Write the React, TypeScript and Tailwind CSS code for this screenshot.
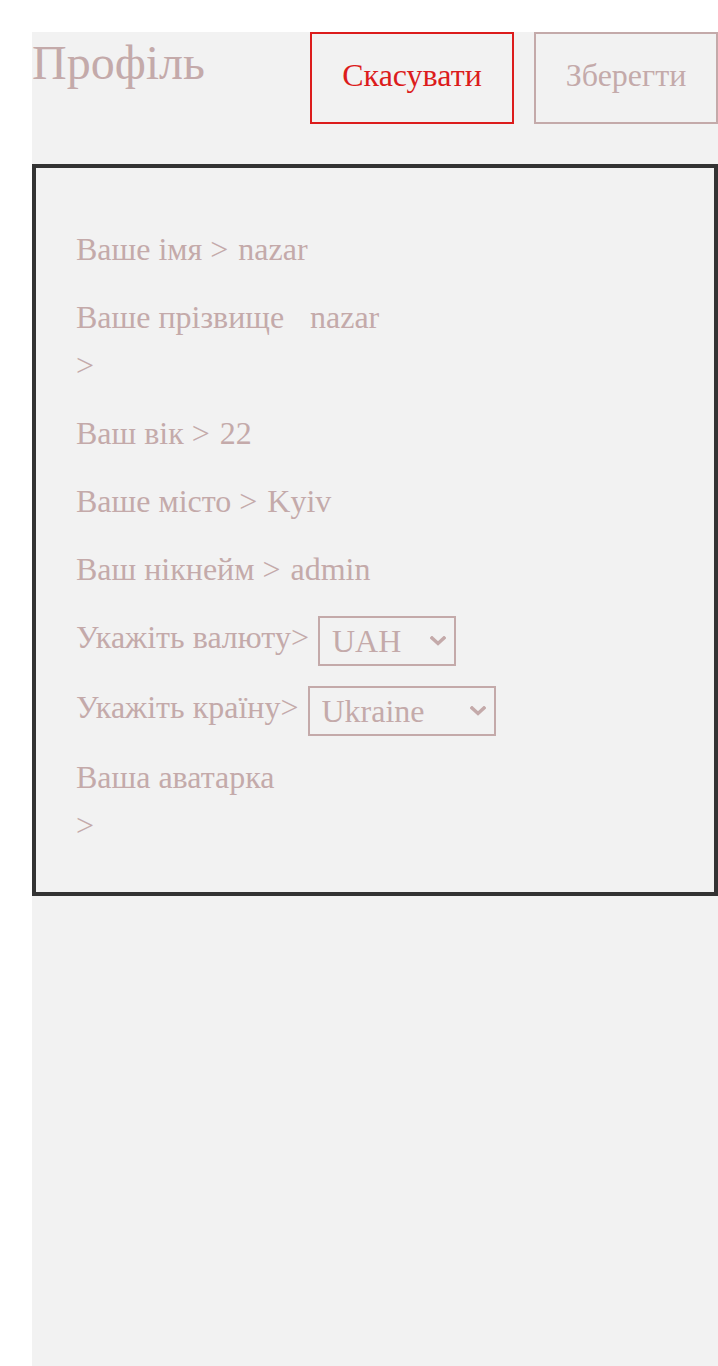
function Chevron() {
  return (
    <svg width="16" height="10" viewBox="0 0 16 10" className="pointer-events-none absolute right-[10px] top-1/2 -translate-y-1/2">
      <polyline points="2,2 8,7.5 14,2" fill="none" stroke="#c4aaaa" strokeWidth="3.5" strokeLinecap="square" />
    </svg>
  );
}

export default function App() {
  const rows = [
    { label: "Ваше імя >", value: "nazar" },
    { label: "Ваше прізвище >", value: "nazar" },
    { label: "Ваш вік >", value: "22" },
    { label: "Ваше місто >", value: "Kyiv" },
    { label: "Ваш нікнейм >", value: "admin" },
  ];

  return (
    <div className="bg-white pt-8 pl-8 font-['Liberation_Serif',serif] text-[#c4aaaa]">
      <div className="bg-[#f2f2f2] min-h-[1334px]">
        <div className="flex justify-between items-start">
          <h1 className="text-[48px] leading-[62px]">Профіль</h1>
          <div className="flex gap-5">
            <button className="w-[204px] h-[92px] pb-1.5 border-2 border-[#dc1c1c] text-[#dc1c1c] text-[32px]">Скасувати</button>
            <button className="w-[184px] h-[92px] pb-1.5 border-2 border-[#c4aaaa] text-[32px]">Зберегти</button>
          </div>
        </div>

        <div className="mt-10 border-4 border-[#333333] pl-10 pt-[57px] pb-[43px] text-[32px] leading-[48px]">
          {rows.map((r) => (
            <div key={r.label} className="flex items-start mb-5">
              <span className="max-w-[224px]">{r.label}</span>
              <span className="ml-2.5">{r.value}</span>
            </div>
          ))}
          <div className="flex items-start mb-[17px]">
            <span>Укажіть валюту&gt;</span>
            <div className="relative ml-[9px] mt-[3px]">
              <select className="appearance-none w-[138px] h-[50px] border-2 border-[#c4aaaa] px-3 leading-[46px]">
                <option>UAH</option>
                <option>USD</option>
                <option>EUR</option>
              </select>
              <Chevron />
            </div>
          </div>
          <div className="flex items-start mb-[17px]">
            <span>Укажіть країну&gt;</span>
            <div className="relative ml-[9px] mt-[3px]">
              <select className="appearance-none w-[188px] h-[50px] border-2 border-[#c4aaaa] px-3 leading-[46px]">
                <option>Ukraine</option>
                <option>Poland</option>
              </select>
              <Chevron />
            </div>
          </div>
          <div className="flex items-start">
            <span className="max-w-[215px]">Ваша аватарка &gt;</span>
          </div>
        </div>
      </div>
    </div>
  );
}
